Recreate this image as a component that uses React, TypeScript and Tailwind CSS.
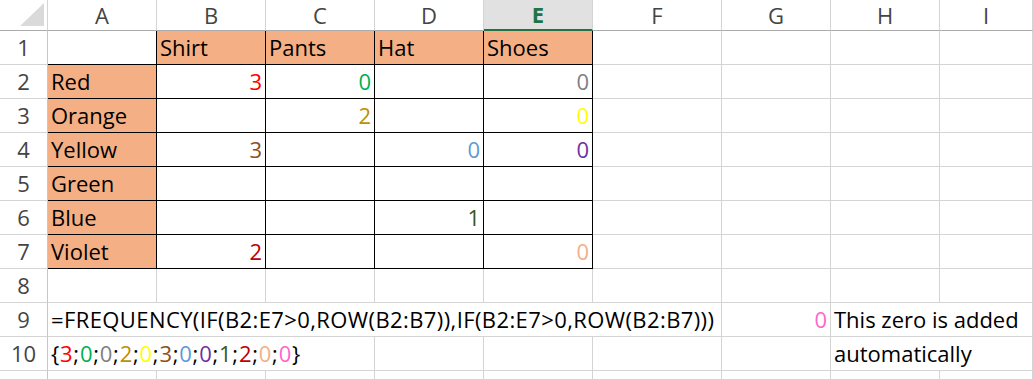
import React from "react";

type Cell = {
  v?: React.ReactNode;
  color?: string;
  right?: boolean;
  fill?: boolean;
  span?: number;
  track?: string;
};

const COLS = ["A", "B", "C", "D", "E", "F", "G", "H", "I"];

// width classes per column (border-box, incl. right gridline)
const COL_W = [
  "w-[109px] shrink-0",
  "w-[109px] shrink-0",
  "w-[109px] shrink-0",
  "w-[109px] shrink-0",
  "w-[109px] shrink-0",
  "w-[129px] shrink-0",
  "w-[109px] shrink-0",
  "w-[109px] shrink-0",
  "flex-1 min-w-0",
];

const SPAN_W: Record<string, string> = {
  "0-6": "w-[674px] shrink-0",
  "0-3": "w-[327px] shrink-0",
  "7-2": "flex-1 min-w-0",
};

const ARRAY: [string, string][] = [
  ["3", "text-[#ff0000]"],
  ["0", "text-[#00b050]"],
  ["0", "text-[#7f7f7f]"],
  ["2", "text-[#bf8f00]"],
  ["0", "text-[#ffff00]"],
  ["3", "text-[#8a5224]"],
  ["0", "text-[#5b9bd5]"],
  ["0", "text-[#7030a0]"],
  ["1", "text-[#375623]"],
  ["2", "text-[#c00000]"],
  ["0", "text-[#f4b084]"],
  ["0", "text-[#ff66cc]"],
];

function ArrayResult() {
  return (
    <span>
      {"{"}
      {ARRAY.map(([n, c], i) => (
        <React.Fragment key={i}>
          <span className={c}>{n}</span>
          {i < ARRAY.length - 1 && ";"}
        </React.Fragment>
      ))}
      {"}"}
    </span>
  );
}

const DATA: Record<number, Record<number, Cell>> = {
  1: {
    1: { v: "Shirt", fill: true },
    2: { v: "Pants", fill: true },
    3: { v: "Hat", fill: true },
    4: { v: "Shoes", fill: true },
  },
  2: {
    0: { v: "Red", fill: true },
    1: { v: "3", color: "text-[#ff0000]", right: true },
    2: { v: "0", color: "text-[#00b050]", right: true },
    4: { v: "0", color: "text-[#7f7f7f]", right: true },
  },
  3: {
    0: { v: "Orange", fill: true },
    2: { v: "2", color: "text-[#bf8f00]", right: true },
    4: { v: "0", color: "text-[#ffff00]", right: true },
  },
  4: {
    0: { v: "Yellow", fill: true },
    1: { v: "3", color: "text-[#8a5224]", right: true },
    3: { v: "0", color: "text-[#5b9bd5]", right: true },
    4: { v: "0", color: "text-[#7030a0]", right: true },
  },
  5: { 0: { v: "Green", fill: true } },
  6: {
    0: { v: "Blue", fill: true },
    3: { v: "1", color: "text-[#375623]", right: true },
  },
  7: {
    0: { v: "Violet", fill: true },
    1: { v: "2", color: "text-[#c00000]", right: true },
    4: { v: "0", color: "text-[#f4b084]", right: true },
  },
  9: {
    0: {
      v: "=FREQUENCY(IF(B2:E7>0,ROW(B2:B7)),IF(B2:E7>0,ROW(B2:B7)))",
      span: 6,
      track: "tracking-[0.4px]",
    },
    6: { v: "0", color: "text-[#ff66cc]", right: true },
    7: { v: "This zero is added", span: 2 },
  },
  10: {
    0: { v: <ArrayResult />, span: 3, track: "tracking-[0.75px]" },
    7: { v: "automatically", span: 2 },
  },
};

function inTable(r: number, c: number) {
  if (r === 1) return c >= 1 && c <= 4;
  return r >= 2 && r <= 7 && c >= 0 && c <= 4;
}

function Row({ r }: { r: number }) {
  const row = DATA[r] || {};
  const cells: React.ReactNode[] = [];
  let c = 0;
  while (c < COLS.length) {
    const cell = row[c] || {};
    const span = cell.span || 1;
    const last = c + span - 1;
    const w = span > 1 ? SPAN_W[`${c}-${span}`] : COL_W[c];
    const rightBlack = inTable(r, last) || inTable(r, last + 1);
    const bottomBlack = inTable(r, c) || inTable(r + 1, c);
    cells.push(
      <div
        key={c}
        className={`${w} h-[34px] border-r border-b flex items-end px-[3px] pb-[5px] whitespace-nowrap ${
          rightBlack ? "border-r-black" : "border-r-[#d4d4d4]"
        } ${bottomBlack ? "border-b-black" : "border-b-[#d4d4d4]"} ${
          cell.fill ? "bg-[#f4b084]" : "bg-white"
        } ${cell.right ? "justify-end" : "justify-start"} ${cell.color || "text-black"}`}
      >
        <span className={`leading-[24px] ${cell.track || ""}`}>{cell.v}</span>
      </div>
    );
    c += span;
  }
  return (
    <div className="flex">
      <div className="w-[48px] shrink-0 h-[34px] border-r border-b border-r-[#c6c6c6] border-b-[#d4d4d4] flex items-end justify-center pb-[5px] text-[#444444]">
        {r <= 10 && <span className="leading-[24px]">{r}</span>}
      </div>
      {cells}
    </div>
  );
}

export default function App() {
  return (
    <div className="w-[1033px] h-[379px] overflow-hidden bg-white font-['Open_Sans',sans-serif] text-[22px]">
      <div className="flex h-[31px]">
        <div className="w-[48px] shrink-0 border-r border-b border-r-[#d4d4d4] border-b-[#ababab] relative">
          <svg width="48" height="30" className="absolute left-0 top-0">
            <polygon points="20,26 44,26 44,3" fill="#dadada" />
          </svg>
        </div>
        {COLS.map((col, i) =>
          col === "E" ? (
            <div
              key={col}
              className={`${COL_W[i]} border-r border-r-[#d4d4d4] border-b-2 border-b-[#217346] bg-[#e1e1e1] flex items-center justify-center font-bold text-[#217346]`}
            >
              {col}
            </div>
          ) : (
            <div
              key={col}
              className={`${COL_W[i]} border-r border-r-[#d4d4d4] border-b border-b-[#ababab] flex items-center justify-center text-[#444444]`}
            >
              {col}
            </div>
          )
        )}
      </div>
      {[1, 2, 3, 4, 5, 6, 7, 8, 9, 10, 11].map((r) => (
        <Row key={r} r={r} />
      ))}
    </div>
  );
}
